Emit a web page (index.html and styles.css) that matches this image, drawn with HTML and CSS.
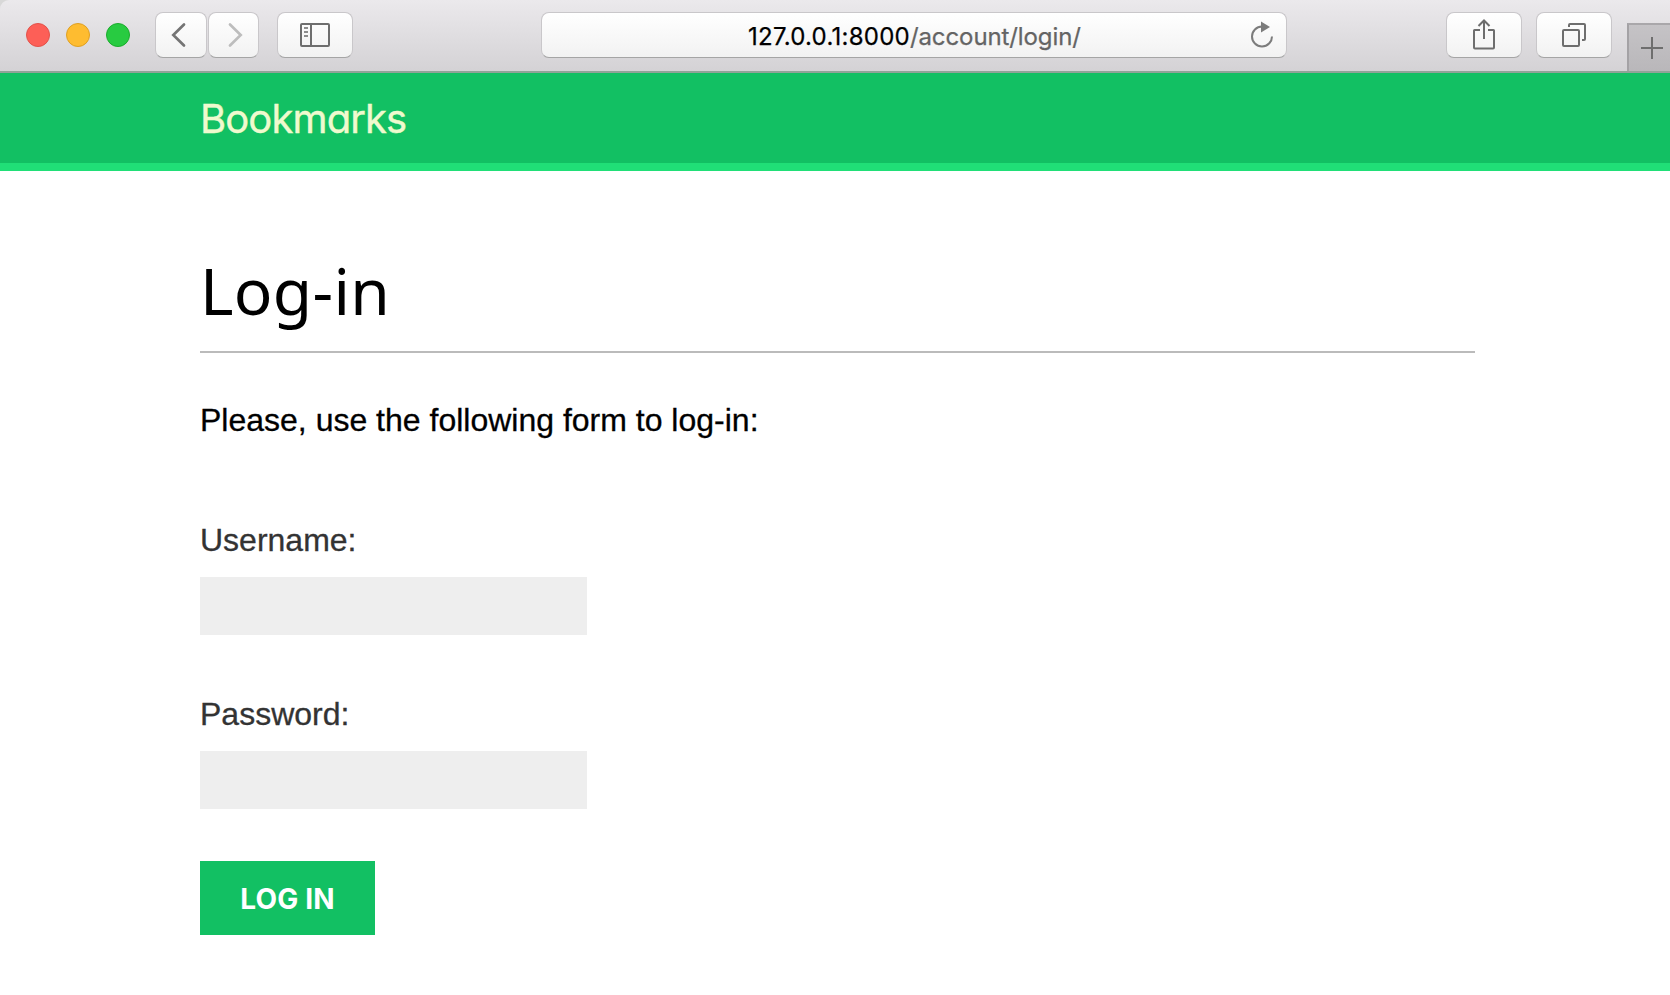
FILE: index.html
```html
<!DOCTYPE html>
<html lang="en">
<head>
<meta charset="utf-8">
<title>Log-in</title>
<link rel="stylesheet" href="styles.css">
</head>
<body>
<div class="chrome">
  <div class="toolbar">
    <span class="light red"></span><span class="light yellow"></span><span class="light green"></span>
    <div class="tool back"><svg width="52" height="45" viewBox="0 0 52 45"><path d="M29 12.500 18.300 23 29 33.500" fill="none" stroke="#747474" stroke-width="2.700" stroke-linecap="round"/></svg></div>
    <div class="tool forward"><svg width="50" height="45" viewBox="0 0 50 45"><path d="M22 12.500 32.700 23 22 33.500" fill="none" stroke="#bdbdbd" stroke-width="2.700" stroke-linecap="round"/></svg></div>
    <div class="tool side"><svg width="75" height="45" viewBox="0 0 75 45" fill="none" stroke="#6e6e6e" stroke-width="2"><rect x="24" y="12" width="28" height="22" rx="1"/><path d="M34 12v22"/><path d="M27 16h4M27 20h4M27 24h4" stroke="#8d8d8d" stroke-width="1.800"/></svg></div>
    <div class="tool address">
      <span class="url"><span class="host">127.0.0.1:8000</span><span class="path">/account/login/</span></span>
      <svg class="reload" width="28" height="32" viewBox="0 0 28 32"><path d="M14 8.500A10 10 0 1 0 24 18.500" transform="translate(0 -1)" fill="none" stroke="#7c7c7c" stroke-width="2"/><path d="M13 2.500v11l9-5.500z" fill="#7c7c7c"/></svg>
    </div>
    <div class="tool share"><svg width="75" height="45" viewBox="0 0 75 45" fill="none" stroke="#6e6e6e" stroke-width="2"><path d="M34 18h-5.500q-.5 0-.5.500v17q0 1 1 1h18q1 0 1-1v-17q0-.5-.5-.5H42"/><path d="M38 27V9M32.500 14l5.500-5.500L43.500 14" /></svg></div>
    <div class="tool tabs"><svg width="75" height="45" viewBox="0 0 75 45" fill="none" stroke="#6e6e6e" stroke-width="2"><rect x="27" y="18" width="16" height="16" rx="1"/><path d="M33 15v-2q0-1 1-1h14q1 0 1 1v14q0 1-1 1h-2"/></svg></div>
    <div class="newtab"><svg width="43" height="48" viewBox="0 0 43 48"><path d="M14 25h22M25 14v22" stroke="#6e6e6e" stroke-width="2"/></svg></div>
  </div>
</div>
<header class="header"><span class="logo">Bookmarks</span></header>
<main class="content">
  <h1 class="title">Log-in</h1>
  <p class="intro">Please, use the following form to log-in:</p>
  <form class="form">
    <label class="label username" for="username">Username:</label>
    <input class="field" id="username" type="text">
    <label class="label password" for="password">Password:</label>
    <input class="field" id="password" type="password">
    <button class="submit" type="button"><span class="submit-text">LOG IN</span></button>
  </form>
</main>
</body>
</html>
```
FILE: styles.css
```css
* { box-sizing: border-box; }
body { margin: 0; background: #fff; height: 995px; overflow: hidden; font-family: "Liberation Sans", Arial, sans-serif; }
.chrome { background: #d8d8d8; }
.toolbar { display: flex; align-items: flex-start; height: 73px; padding: 12px 0 0 26px; background: linear-gradient(#ebe9ec, #d4d2d5); border-bottom: 2px solid #91a398; border-top-left-radius: 9px; overflow: hidden; }
.light { width: 24px; height: 24px; margin: 11px 16px 0 0; border-radius: 50%; border: 1px solid; flex: none; }
.red { background: #fd5f57; border-color: #e2524a; }
.yellow { background: #febc30; border-color: #dfa023; }
.green { background: #28cb41; border-color: #1bac2c; }
.tool { flex: none; height: 46px; border: 1px solid #c9c7ca; border-bottom-color: #a5a5a5; border-radius: 8px; background: linear-gradient(#fff, #f2f2f2); display: flex; }
.tool > svg { display: block; margin: -1px; flex: none; }
.back { width: 52px; margin-left: 9px; }
.forward { width: 51px; margin-left: 1px; }
.side { width: 76px; margin-left: 18px; }
.address { width: 746px; margin-left: 188px; align-items: center; justify-content: space-between; padding: 0 10px 0 206px; }
.url { padding-top: 3px; font: 24px/41px Inter, sans-serif; white-space: nowrap; }
.host { color: #000; letter-spacing: .25px; }
.path { color: #646464; letter-spacing: -.1px; -webkit-text-stroke: .25px #646464; }
.host { -webkit-text-stroke: .25px #000; }
.tool > .reload { margin: 0; }
.share { width: 76px; margin-left: 159px; }
.tabs { width: 76px; margin-left: 14px; }
.newtab { width: 43px; height: 48px; margin: 11px 0 0 15px; background: linear-gradient(#c5c3c6, #b9b7ba); border-left: 2px solid #a4a2a5; border-top: 2px solid #a9a7aa; flex: none; }
.newtab svg { display: block; margin: -2px; }
.header { height: 98px; padding: 21px 0 0 200px; background: #12c063; border-bottom: 8px solid #20df77; }
.logo { display: block; font: 400 40px/50px Inter, sans-serif; letter-spacing: -.9px; -webkit-text-stroke: .4px #efface; font-feature-settings: "cv11"; color: #efface; }
.content { width: 1275px; margin-left: 200px; }
.title { height: 182px; margin: 0; padding-top: 76px; border-bottom: 2px solid #bbb; font: 400 64px/88px "Noto Sans", sans-serif; letter-spacing: .3px; color: #000; }
.intro { margin: 47px 0 0; font-size: 32px; line-height: 40px; color: #000; -webkit-text-stroke: .3px #000; }
.form { display: flex; flex-direction: column; align-items: flex-start; }
.label { font-size: 32px; line-height: 40px; color: #333; margin-bottom: 17px; -webkit-text-stroke: .3px #333; }
.username { margin-top: 80px; }
.password { margin-top: 59px; }
.field { width: 387px; height: 58px; border: 0; padding: 12px; background: #eee; font: inherit; }
.submit { width: 175px; height: 74px; margin-top: 52px; padding: 2px 0 0; border: 0; background: #12c063; color: #fff; font: 700 28px/34px Inter, sans-serif; letter-spacing: .2px; }
```
